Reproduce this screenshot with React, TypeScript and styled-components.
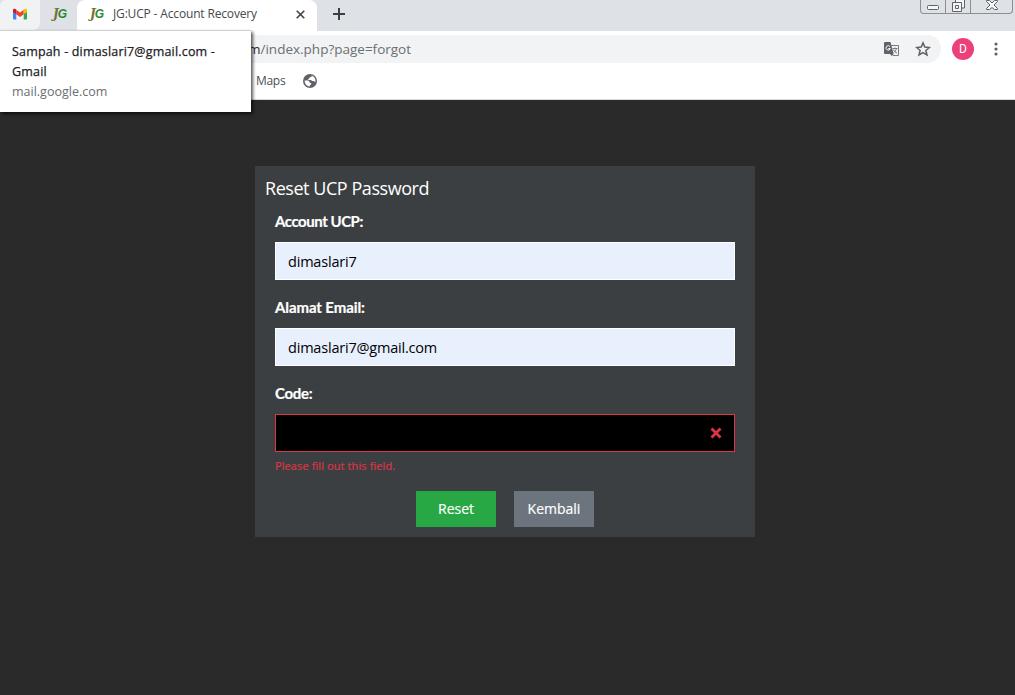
import React from "react";
import styled, { createGlobalStyle } from "styled-components";

const GlobalStyle = createGlobalStyle`
  * { box-sizing: border-box; }
  html, body { margin: 0; height: 100%; overflow: hidden; }
  body { background: #2a2a2a; font-family: "Open Sans", "Noto Sans", sans-serif; }
  svg { display: block; flex: none; }
`;

const Window = styled.div`
  display: flex;
  flex-direction: column;
  position: relative;
  width: 1015px;
  height: 695px;
  overflow: hidden;
`;

const TabStrip = styled.header`
  display: flex;
  height: 31px;
  background: #dee1e6;
`;

const Tab = styled.div<{ $w: number; $kind: "hover" | "plain" | "active" }>`
  display: flex;
  align-items: center;
  width: ${(p) => p.$w}px;
  height: ${(p) => (p.$kind === "active" ? 31 : 30)}px;
  padding: 0 12px 3px;
  background: ${(p) => (p.$kind === "active" ? "#fff" : p.$kind === "hover" ? "#f0f2f4" : "#dee1e6")};
  border-radius: ${(p) => (p.$kind === "plain" ? "0" : p.$kind === "active" ? "8px 8px 0 0" : "6px 0 7px 0")};
`;

const Favicon = styled.span`
  display: flex;
  flex: none;
  width: 16px;
  margin-left: 1px;
  font: italic 700 12px/14px "DejaVu Serif", serif;
  color: #75703a;
  b {
    margin-left: -1px;
    color: #2c8b25;
    font-family: "Liberation Sans", sans-serif;
    font-size: 12px;
  }
`;

const TabTitle = styled.span`
  flex: 1;
  margin-left: 7px;
  font-size: 12px;
  letter-spacing: -0.16px;
  line-height: 16px;
  color: #45494d;
  white-space: nowrap;
`;

const NewTab = styled.div`
  flex: 1;
  padding: 8px 0 0 16px;
`;

const Caption = styled.div`
  display: flex;
  width: 93px;
  height: 14px;
  margin-right: 2px;
  border: 1px solid #8b8e93;
  border-top: 0;
  border-radius: 0 0 4px 4px;
`;

const CaptionButton = styled.span<{ $w: number }>`
  display: flex;
  justify-content: center;
  width: ${(p) => p.$w}px;
  & + & { border-left: 1px solid #8b8e93; }
`;

const Toolbar = styled.div`
  display: flex;
  align-items: center;
  height: 36px;
  padding: 0 13px 0 90px;
  background: #fff;
`;

const Omnibox = styled.div`
  display: flex;
  align-items: center;
  width: 851px;
  height: 28px;
  padding: 0 10px 0 158px;
  border-radius: 14px;
  background: #f1f3f4;
`;

const Url = styled.span`
  flex: 1;
  font-size: 13.5px;
  line-height: 20px;
  color: #6b6f73;
  b { font-weight: 400; color: #303236; }
`;

const OmniIcons = styled.div`
  display: flex;
  align-items: center;
  gap: 16px;
`;

const Avatar = styled.div`
  width: 22px;
  height: 22px;
  margin: 0 20px 0 11px;
  border-radius: 50%;
  background: #ec407a;
  color: #fff;
  font: 12px/22px Roboto, sans-serif;
  text-align: center;
`;

const Bookmarks = styled.div`
  display: flex;
  align-items: center;
  gap: 18px;
  height: 33px;
  padding: 0 0 5px 256px;
  border-bottom: 1px solid #d5d7da;
  background: #fff;
  font-size: 12px;
  letter-spacing: -0.3px;
  color: #4b4f54;
`;

const HoverCard = styled.aside`
  position: absolute;
  left: 0;
  top: 30px;
  width: 251px;
  height: 82px;
  padding: 11px 12px;
  border-top: 1px solid #d0d2d5;
  background: #fff;
  box-shadow: 2px 2px 3px rgba(0, 0, 0, 0.65);
  font-size: 12.5px;
  line-height: 20px;
`;

const CardTitle = styled.div`
  color: #202124;
  letter-spacing: 0.18px;
  -webkit-text-stroke: 0.25px #202124;
`;

const CardHost = styled.div`
  color: #6b6f73;
`;

const Page = styled.main`
  display: flex;
  justify-content: center;
  align-items: flex-start;
  flex: 1;
  padding: 66px 5px 0 0;
  background: #2a2a2a;
`;

const Panel = styled.form`
  width: 500px;
  height: 371px;
  padding: 9px 20px 10px;
  background: #3c3f41;
  color: #fff;
`;

const Heading = styled.h1`
  margin: 0 0 8px -10px;
  font-size: 18px;
  line-height: 26px;
  font-weight: 400;
  letter-spacing: -0.45px;
`;

const Field = styled.div`
  height: 86px;
`;

const Label = styled.label<{ $spacing?: number }>`
  display: block;
  height: 33px;
  font: 700 15px/25px Lato, sans-serif;
  letter-spacing: ${(p) => p.$spacing ?? -0.3}px;
  -webkit-text-stroke: 0.2px #fff;
`;

const Control = styled.div<{ $invalid?: boolean }>`
  display: flex;
  align-items: center;
  height: 38px;
  padding: 0 12px;
  justify-content: ${(p) => (p.$invalid ? "flex-end" : "flex-start")};
  border: 1px solid ${(p) => (p.$invalid ? "#dc3545" : "#fff")};
  background: ${(p) => (p.$invalid ? "#000" : "#e8f0fe")};
  color: #000;
  font-size: 14.5px;
  letter-spacing: -0.2px;
`;

const ErrorText = styled.div`
  margin-top: 5px;
  font-size: 11px;
  line-height: 18px;
  letter-spacing: 0.1px;
  color: #dc3545;
  -webkit-text-stroke: 0.2px #dc3545;
`;

const Actions = styled.div`
  display: flex;
  justify-content: center;
  gap: 18px;
  margin-top: 16px;
`;

const Button = styled.button<{ $color: string }>`
  width: 80px;
  height: 36px;
  padding: 0;
  border: 0;
  background: ${(p) => p.$color};
  color: #fff;
  font: 14px/36px "Open Sans", sans-serif;
  -webkit-text-stroke: 0.18px #fff;
`;

const GmailIcon = () => (
  <svg width="16" height="12" viewBox="0 0 16 12">
    <path d="M1 1.300v9.200c0 .5.4 1 1 1h2.300V4z" fill="#4285f4" />
    <path d="M11.700 4v7.500H14c.6 0 1-.5 1-1V1.300z" fill="#34a853" />
    <path d="M4.300 6.300V1.700L8 4.500l3.700-2.800v4.600L8 9.100z" fill="#ea4335" />
    <path d="M1 2v1.900l3.300 2.400V1.700L3.400 1C2.400.3 1 1 1 2z" fill="#c5221f" />
    <path d="M11.700 1.700v4.600L15 3.900V2c0-1-1.400-1.700-2.400-1z" fill="#fbbc04" />
  </svg>
);

const JgIcon = () => <Favicon>J<b>G</b></Favicon>;

const CloseIcon = () => (
  <svg width="9" height="9" viewBox="0 0 9 9" stroke="#3f4246" strokeWidth="1.600">
    <path d="M.7.7l7.600 7.600M8.300.7L.7 8.300" />
  </svg>
);

const PlusIcon = () => (
  <svg width="12" height="12" viewBox="0 0 12 12" stroke="#3c4043" strokeWidth="2">
    <path d="M6 0v12M0 6h12" />
  </svg>
);

const CaptionIcons = () => (
  <Caption>
    <CaptionButton $w={24}>
      <svg width="12" height="12" viewBox="0 0 12 12" fill="#f4f5f6" stroke="#606267">
        <rect x=".5" y="5.500" width="11" height="4" rx="1" />
      </svg>
    </CaptionButton>
    <CaptionButton $w={25}>
      <svg width="13" height="13" viewBox="0 0 13 13" fill="#f4f5f6" stroke="#606267">
        <path d="M3.500-1h9v9h-9z" />
        <path d="M.5 2.500h9v9h-9z" />
        <path d="M3.500 5.500h3v3h-3z" />
      </svg>
    </CaptionButton>
    <CaptionButton $w={42}>
      <svg width="12" height="11" viewBox="0 0 12 11" fill="#f4f5f6" stroke="#606267">
        <path d="M.5.5h3L6 3 8.500.5h3v1L8 5l3.500 3.500v1h-3L6 7.500l-2.500 2h-3v-1L4 5 .5 1.500z" />
      </svg>
    </CaptionButton>
  </Caption>
);

const TranslateIcon = () => (
  <svg width="15" height="15" viewBox="0 0 15 15">
    <path d="M6.500 3.500h8v10H9z" fill="#f1f3f4" stroke="#777b80" />
    <path d="M1 0h5.500l3 12H1a1 1 0 0 1-1-1V1a1 1 0 0 1 1-1z" fill="#5f6368" />
    <path d="M6 4.600A2.200 2.200 0 1 0 6.300 6.500H4.300" fill="none" stroke="#fff" />
    <path d="M8.500 6.500h5M11 5.500v1M12.500 6.500c-.5 2-2 3.500-3 4M9.500 7.500c.5 1.500 2 3 3.500 3.500" fill="none" stroke="#777b80" />
    <path d="M6 12h3.200L7.800 14z" fill="#5f6368" />
  </svg>
);

const StarIcon = () => (
  <svg width="16" height="16" viewBox="0 0 16 16" fill="none" stroke="#5f6368" strokeWidth="1.500">
    <path d="M8 1.900l1.800 4.200 4.600.4-3.500 3 1.100 4.500-4-2.400L4 14l1.100-4.500-3.500-3 4.600-.4z" />
  </svg>
);

const MenuIcon = () => (
  <svg width="4" height="14" viewBox="0 0 4 14" fill="#5f6368">
    <circle cx="2" cy="2" r="1.600" />
    <circle cx="2" cy="7" r="1.600" />
    <circle cx="2" cy="12" r="1.600" />
  </svg>
);

const GlobeIcon = () => (
  <svg width="14" height="14" viewBox="0 0 14 14">
    <circle cx="7" cy="7" r="7" fill="#5f6368" />
    <path d="M8.500 1.600c.7.500.2 1.300-.6 1.500l-1.500.4v1l-1.300.4.2 1.100h2.800l.9 1h1.500l1.900 1c.6-3-1.200-5.600-3.900-6.400z" fill="#fff" />
    <path d="M1.700 6.600h3.500l1.600 1.300v1h1.400v1.400l-1.300.9-.2 1.200C4 12.500 1.500 10 1.700 6.600z" fill="#fff" />
  </svg>
);

const InvalidIcon = () => (
  <svg width="12" height="12" viewBox="0 0 12 12" stroke="#dc3545" strokeWidth="2.800">
    <path d="M1.500 1.500l9 9M10.500 1.500l-9 9" />
  </svg>
);

export default function App() {
  return (
    <Window>
      <GlobalStyle />
      <TabStrip>
        <Tab $w={40} $kind="hover"><GmailIcon /></Tab>
        <Tab $w={37} $kind="plain"><JgIcon /></Tab>
        <Tab $w={240} $kind="active">
          <JgIcon />
          <TabTitle>JG:UCP - Account Recovery</TabTitle>
          <CloseIcon />
        </Tab>
        <NewTab><PlusIcon /></NewTab>
        <CaptionIcons />
      </TabStrip>
      <Toolbar>
        <Omnibox>
          <Url><b>m</b>/index.php?page=forgot</Url>
          <OmniIcons><TranslateIcon /><StarIcon /></OmniIcons>
        </Omnibox>
        <Avatar>D</Avatar>
        <MenuIcon />
      </Toolbar>
      <Bookmarks><span>Maps</span><GlobeIcon /></Bookmarks>
      <Page>
        <Panel>
          <Heading>Reset UCP Password</Heading>
          <Field>
            <Label $spacing={-0.45}>Account UCP:</Label>
            <Control>dimaslari7</Control>
          </Field>
          <Field>
            <Label $spacing={-0.1}>Alamat Email:</Label>
            <Control>dimaslari7@gmail.com</Control>
          </Field>
          <div>
            <Label>Code:</Label>
            <Control $invalid><InvalidIcon /></Control>
            <ErrorText>Please fill out this field.</ErrorText>
          </div>
          <Actions>
            <Button type="button" $color="#28a745">Reset</Button>
            <Button type="button" $color="#6c757d">Kembali</Button>
          </Actions>
        </Panel>
      </Page>
      <HoverCard>
        <CardTitle>Sampah - dimaslari7@gmail.com - Gmail</CardTitle>
        <CardHost>mail.google.com</CardHost>
      </HoverCard>
    </Window>
  );
}
